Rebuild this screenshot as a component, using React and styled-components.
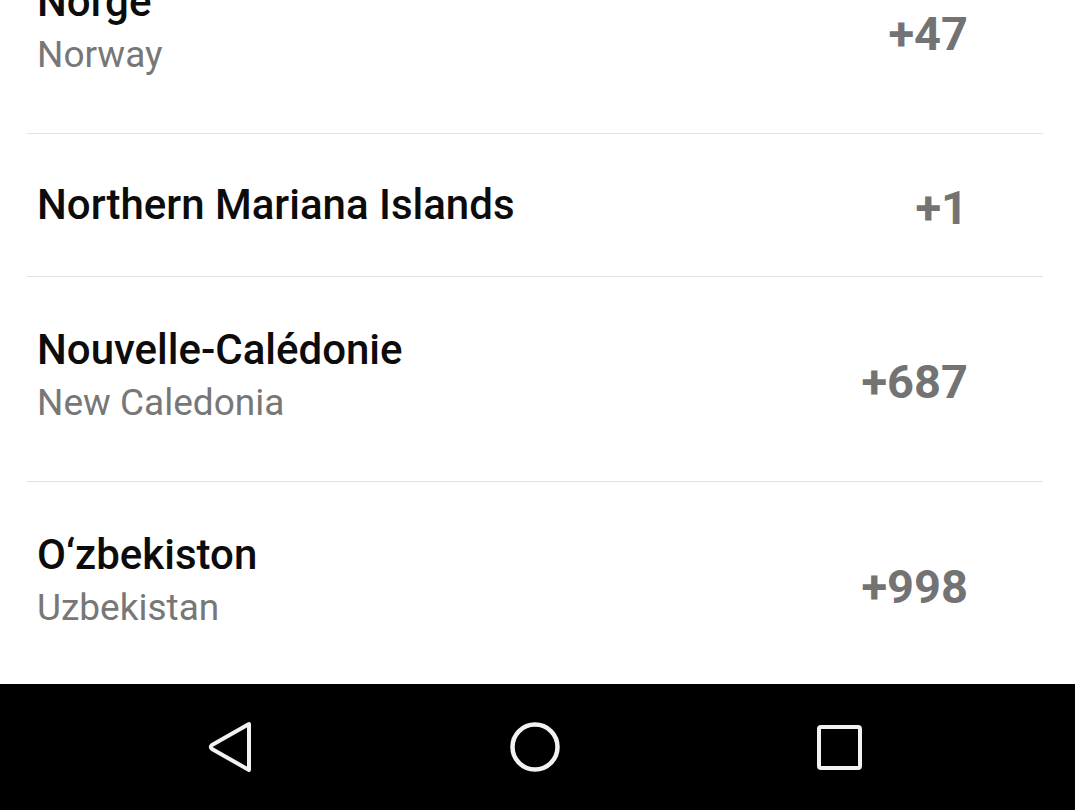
import styled, { createGlobalStyle } from "styled-components";

const GlobalStyle = createGlobalStyle`
  html, body {
    margin: 0;
    padding: 0;
    background: #ffffff;
    overflow: hidden;
  }
  body {
    font-family: Roboto, "Noto Sans", sans-serif;
  }
`;

const countries = [
  { name: "Norge", english: "Norway", code: "+47" },
  { name: "Northern Mariana Islands", code: "+1" },
  { name: "Nouvelle-Calédonie", english: "New Caledonia", code: "+687" },
  { name: "O‘zbekiston", english: "Uzbekistan", code: "+998" },
];

const App = () => {
  return (
    <>
      <GlobalStyle />
      <Screen>
        <ListArea>
          <List>
            {countries.map((c) => (
              <Row key={c.name} $single={!c.english}>
                <Names $single={!c.english}>
                  <Title>{c.name}</Title>
                  {c.english && <Subtitle>{c.english}</Subtitle>}
                </Names>
                <Code>{c.code}</Code>
              </Row>
            ))}
          </List>
        </ListArea>
        <NavBar>
          <NavButton>
            <svg width="48" height="52" viewBox="0 0 48 52">
              <path
                d="M42 3 L42 49 L5 28 Q2.5 26 5 24 Z"
                fill="none"
                stroke="#f2f2f2"
                strokeWidth="4"
                strokeLinejoin="round"
              />
            </svg>
          </NavButton>
          <NavButton>
            <svg width="52" height="52" viewBox="0 0 52 52">
              <circle cx="26" cy="26" r="22.5" fill="none" stroke="#f2f2f2" strokeWidth="4.5" />
            </svg>
          </NavButton>
          <NavButton>
            <svg width="48" height="48" viewBox="0 0 48 48">
              <rect
                x="4"
                y="4"
                width="41"
                height="41"
                rx="2"
                fill="none"
                stroke="#f2f2f2"
                strokeWidth="4"
              />
            </svg>
          </NavButton>
        </NavBar>
      </Screen>
    </>
  );
};

const Screen = styled.div`
  display: flex;
  flex-direction: column;
  width: 1075px;
  height: 810px;
`;

const ListArea = styled.div`
  flex: 1;
  overflow: hidden;
`;

const List = styled.div`
  display: flex;
  flex-direction: column;
  margin-top: -71px;
  padding: 0 32px 0 27px;
`;

const Row = styled.div`
  display: flex;
  align-items: center;
  justify-content: space-between;
  height: ${(p) => (p.$single ? "142px" : "204px")};
  padding: 0 75px 0 10px;
  border-bottom: 1px solid #e3e3e3;
`;

const Names = styled.div`
  display: flex;
  flex-direction: column;
  padding-bottom: ${(p) => (p.$single ? "0" : "5px")};
`;

const Title = styled.div`
  font-family: Roboto, "Noto Sans", sans-serif;
  font-weight: 500;
  font-size: 42px;
  line-height: 52px;
  color: #0c0c0c;
`;

const Subtitle = styled.div`
  font-family: Roboto, "Noto Sans", sans-serif;
  font-weight: 400;
  font-size: 37px;
  line-height: 53px;
  color: #777777;
`;

const Code = styled.div`
  font-family: Roboto, "Noto Sans", sans-serif;
  font-weight: 700;
  font-size: 47px;
  padding-top: 4px;
  color: #737373;
`;

const NavBar = styled.div`
  height: 126px;
  background: #000000;
  display: flex;
  align-items: center;
  justify-content: center;
  gap: 254px;
  padding-right: 5px;
`;

const NavButton = styled.div`
  display: flex;
  align-items: center;
  justify-content: center;
`;

export default App;
